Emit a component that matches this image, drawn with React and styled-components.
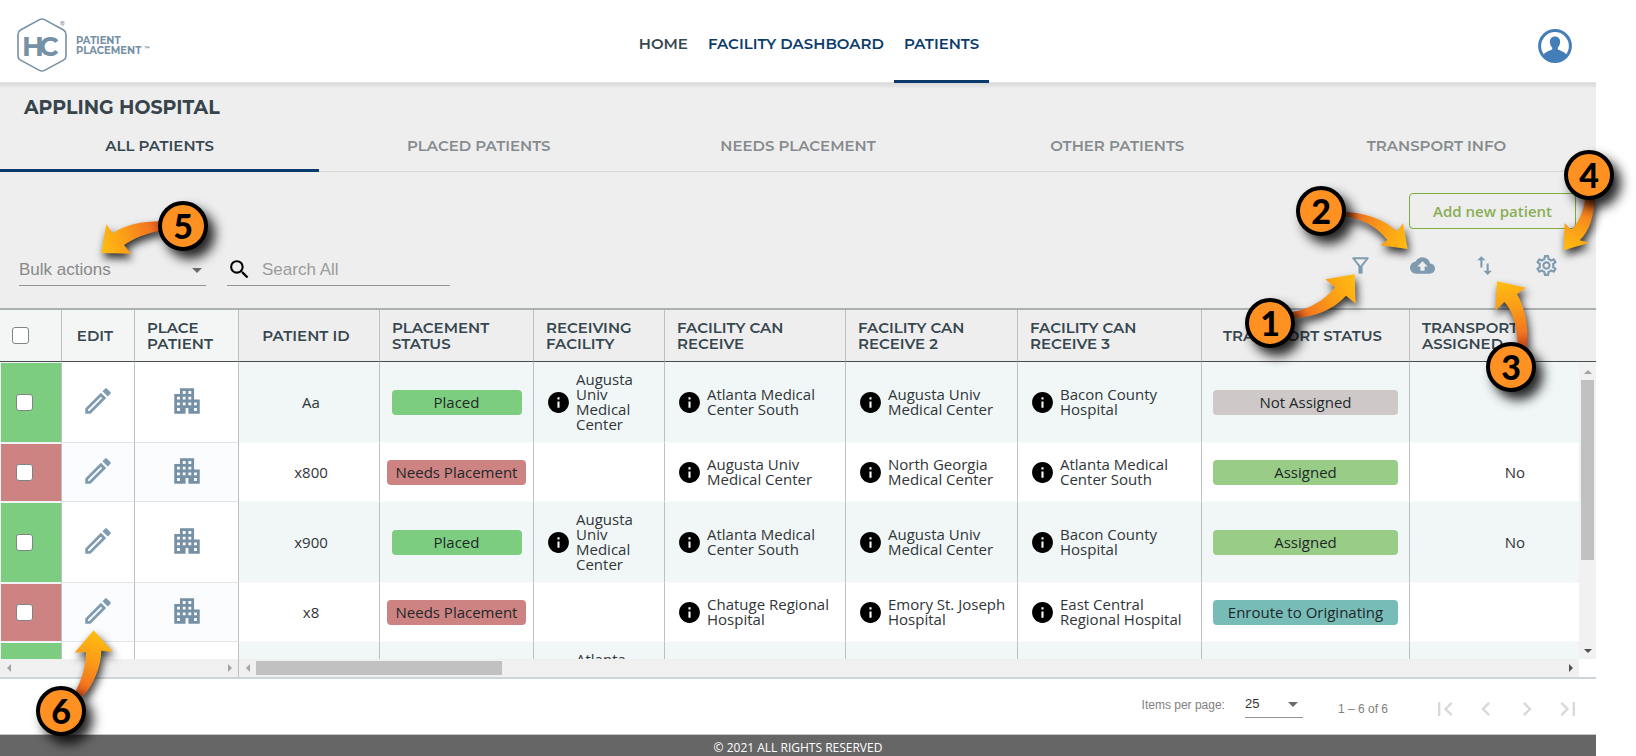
import React from "react";
import styled, { createGlobalStyle, css } from "styled-components";
import {
  MdApartment,
  MdArrowDropDown,
  MdBackup,
  MdChevronLeft,
  MdChevronRight,
  MdFirstPage,
  MdInfo,
  MdLastPage,
  MdOutlineEdit,
  MdOutlineFilterAlt,
  MdOutlineSettings,
  MdSearch,
  MdSwapVert,
} from "react-icons/md";

const heading = `"Montserrat", "Inter", sans-serif`;
const bodyFont = `"Open Sans", "Noto Sans", sans-serif`;
const formFont = `"Liberation Sans", Arial, sans-serif`;

const GlobalStyle = createGlobalStyle`
  *, *::before, *::after { box-sizing: border-box; }
  body { margin: 0; background: #fff; font-family: ${bodyFont}; color: #303538; }
  button, select, input { font: inherit; color: inherit; }
  svg { display: block; }
`;

const Page = styled.div`
  position: relative;
  overflow: hidden;
  padding-right: 40px;
`;

/* ---------- top bar ---------- */

const TopBar = styled.header`
  position: relative;
  display: grid;
  grid-template-columns: 1fr auto 1fr;
  height: 83px;
  padding: 0 24px 0 17px;
  background: #fff;
  border-bottom: 1px solid #e4e4e4;
`;

const Brand = styled.a`
  display: flex;
  align-items: center;
  gap: 9px;
  padding-top: 8px;
  color: #7690a5;
  text-decoration: none;
`;

const BrandName = styled.span`
  padding-top: 3px;
  font: 700 10px/10px ${heading};
  sup { font-size: 5px; line-height: 5px; margin-left: 3px; }
`;

const Nav = styled.nav`
  display: flex;
  padding-left: 29px;
`;

const NavLink = styled.a`
  display: flex;
  align-items: center;
  padding: 8px 10px 0;
  border-bottom: 3px solid ${(p) => (p.$active ? "#0b3b6b" : "transparent")};
  margin-bottom: -1px;
  font: 600 15px/20px ${heading};
  color: ${(p) => (p.$muted ? "#37474f" : "#0b3b6b")};
  text-decoration: none;
`;

const ProfileButton = styled.button`
  justify-self: end;
  align-self: center;
  margin-top: 9px;
  padding: 0;
  border: 0;
  background: none;
`;

/* ---------- title, tabs, toolbar ---------- */

const Panel = styled.section`
  background: linear-gradient(#d9d9d9, #eee 6px);
`;

const Title = styled.h1`
  margin: 0;
  padding: 13px 24px 0;
  font: 700 19px/24px ${heading};
  color: #37444c;
`;

const Tabs = styled.nav`
  display: flex;
`;

const Tab = styled.a`
  flex: 1;
  display: flex;
  align-items: center;
  justify-content: center;
  height: 52px;
  font: 600 15px/20px ${heading};
  color: ${(p) => (p.$active ? "#37474f" : "#868b8e")};
  text-decoration: none;
  box-shadow: inset 0 ${(p) => (p.$active ? "-3px #0b3b6b" : "-1px #d5d5d5")};
`;

const Toolbar = styled.div`
  display: flex;
  flex-direction: column;
  gap: 17px;
  padding: 21px 20px 22px 19px;
`;

const AddButton = styled.button`
  align-self: flex-end;
  width: 167px;
  height: 36px;
  border: 1px solid #7fae3e;
  border-radius: 4px;
  background: transparent;
  color: #8aae54;
  font: 600 15px/20px ${bodyFont};
`;

const Controls = styled.div`
  display: flex;
  align-items: center;
  height: 40px;
`;

const SelectBox = styled.label`
  position: relative;
  display: flex;
  align-items: center;
  width: ${(p) => p.$width}px;
  height: ${(p) => p.$height}px;
  padding-top: ${(p) => p.$drop || 0}px;
  border-bottom: 1px solid #949494;
  color: ${(p) => p.$color};
  font: ${(p) => p.$size}px/20px ${formFont};
  select {
    appearance: none;
    width: 100%;
    padding: 0;
    border: 0;
    background: none;
  }
  svg { position: absolute; right: ${(p) => p.$inset}px; color: #6c6c6c; pointer-events: none; }
`;

const SearchBox = styled.label`
  display: flex;
  align-items: center;
  gap: 10px;
  width: 223px;
  height: 40px;
  margin-left: 21px;
  padding-top: 8px;
  border-bottom: 1px solid #949494;
  color: #000;
  input {
    flex: 1;
    min-width: 0;
    padding: 0;
    border: 0;
    background: none;
    font: 17px/20px ${formFont};
  }
  input::placeholder { color: #9b9b9b; opacity: 1; }
`;

const Tools = styled.div`
  display: flex;
  gap: 37px;
  margin: 0 17px 2px auto;
`;

const IconButton = styled.button`
  display: inline-flex;
  padding: 0;
  border: 0;
  background: none;
  color: ${(p) => p.$color || "#7f9bb0"};
`;

/* ---------- table ---------- */

const TableRegion = styled.div`
  position: relative;
  height: 351px;
  overflow: hidden;
  border-top: 2px solid #abb0b3;
`;

const Table = styled.table`
  width: 1617px;
  table-layout: fixed;
  border-collapse: separate;
  border-spacing: 0;
  font: 15px/15px ${bodyFont};
`;

const HeadCell = styled.th`
  height: 52px;
  padding: ${(p) => (p.$wrap ? "0 0 0 12px" : "0 14px 0 8px")};
  border-right: 1px solid #bcc0c2;
  border-bottom: 1px solid #484d50;
  background: ${(p) => (p.$frozen ? "#f4f6f6" : "#eee")};
  color: #37474f;
  font: 600 15px/16px ${heading};
  text-align: ${(p) => (p.$wrap ? "left" : "center")};
  white-space: nowrap;
`;

const Cell = styled.td`
  height: 59px;
  padding: 10px 8px 10px 12px;
  border-right: 1px solid #bcc0c2;
  border-bottom: 1px solid ${(p) => (p.$frozen ? "#e2e5e8" : "#f8fafa")};
  background: ${(p) => {
    if (p.$frozen) return p.$odd ? "#fff" : "#fbfcfe";
    return p.$odd ? "#f1f7f7" : "#fff";
  }};
  text-align: center;
  ${(p) => p.$tight && css`padding: 0;`}
`;

const markColors = { Placed: "#7dcd80", "Needs Placement": "#cd8381" };

const MarkCell = styled.td`
  padding: 0 13px 0 15px;
  border: 1px solid #f1f4f4;
  border-right-color: #bcc0c2;
  background: ${(p) => markColors[p.$status]};
`;

const CheckBox = styled.input`
  appearance: none;
  display: block;
  width: 17px;
  height: 17px;
  margin: 0 0 0 ${(p) => (p.$head ? 4 : 0)}px;
  border: 1px solid #7d8587;
  border-radius: 3px;
  background: #fff;
`;

const Pill = styled.span`
  display: inline-block;
  min-width: ${(p) => p.$width}px;
  padding: 5px 9px;
  border-radius: 4px;
  background: ${(p) => p.$bg};
  color: #20282a;
  white-space: nowrap;
  vertical-align: middle;
`;

const Facility = styled.div`
  display: flex;
  align-items: center;
  gap: 5px;
  text-align: left;
  svg { flex: none; color: #000; }
`;

const VerticalScroll = styled.div`
  position: absolute;
  top: 53px;
  right: 0;
  bottom: 0;
  display: flex;
  flex-direction: column;
  align-items: center;
  width: 17px;
  background: #f1f1f1;
`;

const HorizontalScroll = styled.div`
  display: flex;
  align-items: center;
  height: 18px;
  padding-right: 17px;
  background: linear-gradient(#f0f0f0, #f0f0f0) no-repeat 0 0 / calc(100% - 17px) 100%;
`;

const Pane = styled.div`
  display: flex;
  align-items: center;
  justify-content: space-between;
  height: 18px;
  ${(p) => (p.$width ? `width: ${p.$width}px; border-right: 1px solid #bcc0c2;` : "flex: 1;")}
`;

const Thumb = styled.span`
  background: #c1c1c1;
  ${(p) =>
    p.$vertical
      ? "width: 13px; height: 180px; margin-bottom: auto;"
      : "width: 246px; height: 14px; margin-right: auto;"}
`;

const Arrow = styled.span`
  display: flex;
  align-items: center;
  justify-content: center;
  width: 17px;
  height: 17px;
  color: ${(p) => (p.$dark ? "#505050" : "#a3a3a3")};
`;

/* ---------- paginator and footer ---------- */

const Paginator = styled.div`
  display: flex;
  align-items: center;
  justify-content: flex-end;
  height: 58px;
  padding: 3px 14px 0;
  border-top: 2px solid #cfd4d8;
  background: #fff;
  color: #808080;
  font: 12px/16px ${formFont};
`;

const PerPage = styled.div`
  display: flex;
  align-items: center;
  gap: 20px;
  margin: 0 35px 8px 0;
`;

const Pages = styled.div`
  display: flex;
  gap: 13px;
  margin-left: 43px;
`;

const Footer = styled.footer`
  height: 21px;
  padding-top: 5px;
  background: #666;
  box-shadow: 0 -1px #c3c8c8;
  color: #fff;
  font: 12px/16px ${bodyFont};
  text-align: center;
`;

/* ---------- numbered callouts ---------- */

const CalloutBox = styled.div`
  position: absolute;
  z-index: 5;
  top: ${(p) => p.$top}px;
  ${(p) => (p.$left !== undefined ? `left: ${p.$left}px;` : `right: ${p.$right}px;`)}
  width: 50px;
  height: 50px;
  pointer-events: none;
  svg {
    position: absolute;
    top: -75px;
    left: -75px;
    filter: drop-shadow(2px 5px 4px rgba(0, 0, 0, 0.8));
  }
`;

const Disc = styled.span`
  position: relative;
  display: flex;
  align-items: center;
  justify-content: center;
  height: 50px;
  border: 4px solid #000;
  border-radius: 50%;
  background: #ff9122;
  box-shadow: 7px 8px 12px rgba(0, 0, 0, 0.85);
  color: #000;
  font: 900 34px/40px Lato, sans-serif;
`;

function Callout({ n, path, tip, ...place }) {
  return (
    <CalloutBox {...place}>
      <svg width="200" height="200" viewBox="-300 -300 600 600" aria-hidden="true">
        <defs>
          <linearGradient id={`arrow${n}`} gradientUnits="userSpaceOnUse" x1="0" y1="0" x2={tip[0]} y2={tip[1]}>
            <stop offset="0.26" stopColor="#d8561c" />
            <stop offset="0.38" stopColor="#f3761f" />
            <stop offset="0.65" stopColor="#fb9a18" />
            <stop offset="1" stopColor="#ffbe10" />
          </linearGradient>
        </defs>
        <path d={path} fill={`url(#arrow${n})`} />
      </svg>
      <Disc>{n}</Disc>
    </CalloutBox>
  );
}

const callouts = [
  { n: 1, $right: 341, $top: 298, tip: [254, -146], path: "M254-146L166-131L195-107C165-70 120-40 60-32L60-15C130-15 190-40 228-82L257-58Z" },
  { n: 2, $right: 290, $top: 186, tip: [260, 114], path: "M260 114L246 36L228 61C190 25 130 3 60 2L60 16C120 20 165 45 199 87L178 103Z" },
  { n: 3, $right: 100, $top: 342, tip: [-42, -257], path: "M-42-257L45-238L18-219C45-170 54-120 47-50L20-60C20-120 5-170-20-195L-47-169Z" },
  { n: 4, $right: 22, $top: 150, tip: [-76, 226], path: "M-76 226L-73 144L-52 165C-30 140-15 110-10 60L18 60C18 120 0 170-28 196L1 203Z" },
  { n: 5, $left: 158, $top: 201, tip: [-245, 81], path: "M-245 81L-230-5L-211 22C-170-5-120-15-60-14L-60 12C-110 22-150 38-177 57L-156 83Z" },
  { n: 6, $left: 36, $top: 686, tip: [98, -242], path: "M98-242L41-175L75-177C75-130 62-95 42-56L66-44C95-75 120-130 121-181L156-178Z" },
];

/* ---------- data ---------- */

const columns = [
  { lines: ["PATIENT ID"], width: 141 },
  { lines: ["PLACEMENT", "STATUS"], width: 154 },
  { lines: ["RECEIVING", "FACILITY"], width: 131 },
  { lines: ["FACILITY CAN", "RECEIVE"], width: 181 },
  { lines: ["FACILITY CAN", "RECEIVE 2"], width: 172 },
  { lines: ["FACILITY CAN", "RECEIVE 3"], width: 184 },
  { lines: ["TRANSPORT STATUS"], width: 208 },
  { lines: ["TRANSPORT", "ASSIGNED"], width: 207 },
];

const transportColors = {
  "Not Assigned": "#cec8c8",
  Assigned: "#99cc86",
  "Enroute to Originating": "#78bcb7",
};

const patients = [
  { id: "Aa", status: "Placed", facilities: ["Augusta Univ Medical Center", "Atlanta Medical Center South", "Augusta Univ Medical Center", "Bacon County Hospital"], transport: "Not Assigned", assigned: "" },
  { id: "x800", status: "Needs Placement", facilities: ["", "Augusta Univ Medical Center", "North Georgia Medical Center", "Atlanta Medical Center South"], transport: "Assigned", assigned: "No" },
  { id: "x900", status: "Placed", facilities: ["Augusta Univ Medical Center", "Atlanta Medical Center South", "Augusta Univ Medical Center", "Bacon County Hospital"], transport: "Assigned", assigned: "No" },
  { id: "x8", status: "Needs Placement", facilities: ["", "Chatuge Regional Hospital", "Emory St. Joseph Hospital", "East Central Regional Hospital"], transport: "Enroute to Originating", assigned: "" },
  { id: "x7", status: "Placed", facilities: ["Atlanta Medical Center South", "", "", ""], transport: "Assigned", assigned: "" },
];

const tabs = ["ALL PATIENTS", "PLACED PATIENTS", "NEEDS PLACEMENT", "OTHER PATIENTS", "TRANSPORT INFO"];

function Triangle({ points }) {
  return (
    <svg width="8" height="8" viewBox="0 0 8 8" fill="currentColor" aria-hidden="true">
      <polygon points={points} />
    </svg>
  );
}

const up = "0,6 4,2 8,6";
const down = "0,2 4,6 8,2";
const left = "6,0 2,4 6,8";
const right = "2,0 6,4 2,8";

function Logo() {
  return (
    <svg width="50" height="54" viewBox="0 0 50 54" aria-hidden="true">
      <path
        d="M22.5 1.6Q25 .3 27.500 1.600L46.500 12Q49 13.500 49 16.200V38Q49 40.700 46.500 42.100L27.500 52.400Q25 53.700 22.500 52.400L3.500 42.100Q1 40.700 1 38V16.200Q1 13.500 3.500 12Z"
        fill="none"
        stroke="currentColor"
        strokeWidth="1.600"
      />
      <g fill="currentColor" fontFamily="Montserrat, Inter, sans-serif" fontWeight="700" fontSize="27">
        <text x="5" y="38">H</text>
        <text x="22" y="38">C</text>
      </g>
      <text x="43" y="9" fill="currentColor" fontFamily="Inter, sans-serif" fontSize="7">®</text>
    </svg>
  );
}

function Avatar() {
  return (
    <svg width="34" height="34" viewBox="0 0 34 34" aria-hidden="true">
      <circle cx="17" cy="17" r="15.400" fill="#fff" stroke="#457db8" strokeWidth="3" />
      <path
        d="M17 7.500c3.300 0 5.200 2.300 5.100 5.400-.1 2.700-1 4.200-2.300 5.500v1.800c.8 1.200 6.200 1.900 8.800 5.400C26.500 30.500 22 33 17 33S7.500 30.500 5.400 25.600c2.600-3.500 8-4.200 8.800-5.400v-1.800c-1.300-1.300-2.200-2.800-2.300-5.500-.1-3.100 1.800-5.400 5.100-5.400z"
        fill="#457db8"
      />
    </svg>
  );
}

function PatientRow({ patient, odd }) {
  const { id, status, facilities, transport, assigned } = patient;
  return (
    <tr>
      <MarkCell $status={status}>
        <CheckBox type="checkbox" aria-label={`Select ${id}`} />
      </MarkCell>
      <Cell $frozen $odd={odd} $tight>
        <IconButton type="button" aria-label={`Edit ${id}`}>
          <MdOutlineEdit size={34} />
        </IconButton>
      </Cell>
      <Cell $frozen $odd={odd} $tight>
        <IconButton type="button" $color="#7690a5" aria-label={`Place ${id}`}>
          <MdApartment size={34} />
        </IconButton>
      </Cell>
      <Cell $odd={odd}>{id}</Cell>
      <Cell $odd={odd} $tight>
        <Pill $width={130} $bg={markColors[status]}>{status}</Pill>
      </Cell>
      {facilities.map((name, i) => (
        <Cell key={i} $odd={odd}>
          {name && (
            <Facility>
              <MdInfo size={25} />
              <span>{name}</span>
            </Facility>
          )}
        </Cell>
      ))}
      <Cell $odd={odd} $tight>
        <Pill $width={185} $bg={transportColors[transport]}>{transport}</Pill>
      </Cell>
      <Cell $odd={odd}>{assigned}</Cell>
    </tr>
  );
}

export default function App() {
  return (
    <Page>
      <GlobalStyle />
      <TopBar>
        <Brand href="#">
          <Logo />
          <BrandName>
            PATIENT
            <br />
            PLACEMENT<sup>™</sup>
          </BrandName>
        </Brand>
        <Nav>
          <NavLink href="#" $muted>HOME</NavLink>
          <NavLink href="#">FACILITY DASHBOARD</NavLink>
          <NavLink href="#" $active>PATIENTS</NavLink>
        </Nav>
        <ProfileButton type="button" aria-label="Profile">
          <Avatar />
        </ProfileButton>
      </TopBar>

      <Panel>
        <Title>APPLING HOSPITAL</Title>
        <Tabs>
          {tabs.map((name, i) => (
            <Tab key={name} href="#" $active={i === 0}>{name}</Tab>
          ))}
        </Tabs>
        <Toolbar>
          <AddButton type="button">Add new patient</AddButton>
          <Controls>
            <SelectBox $width={187} $height={40} $drop={8} $size={17} $inset={-3} $color="#888">
              <select aria-label="Bulk actions">
                <option>Bulk actions</option>
              </select>
              <MdArrowDropDown size={24} />
            </SelectBox>
            <SearchBox>
              <MdSearch size={25} />
              <input type="text" placeholder="Search All" aria-label="Search All" />
            </SearchBox>
            <Tools>
              <IconButton type="button" aria-label="Filter"><MdOutlineFilterAlt size={25} /></IconButton>
              <IconButton type="button" aria-label="Upload"><MdBackup size={25} /></IconButton>
              <IconButton type="button" aria-label="Sort"><MdSwapVert size={25} /></IconButton>
              <IconButton type="button" aria-label="Settings"><MdOutlineSettings size={25} /></IconButton>
            </Tools>
          </Controls>
        </Toolbar>
      </Panel>

      <TableRegion>
        <Table>
          <colgroup>
            <col width="62" />
            <col width="73" />
            <col width="104" />
            {columns.map((c) => (
              <col key={c.lines.join(" ")} width={c.width} />
            ))}
          </colgroup>
          <thead>
            <tr>
              <HeadCell $frozen><CheckBox $head type="checkbox" aria-label="Select all" /></HeadCell>
              <HeadCell $frozen>EDIT</HeadCell>
              <HeadCell $frozen $wrap>PLACE<br />PATIENT</HeadCell>
              {columns.map(({ lines }) => (
                <HeadCell key={lines.join(" ")} $wrap={lines.length > 1}>
                  {lines[0]}
                  {lines[1] && <><br />{lines[1]}</>}
                </HeadCell>
              ))}
            </tr>
          </thead>
          <tbody>
            {patients.map((p, i) => (
              <PatientRow key={p.id} patient={p} odd={i % 2 === 0} />
            ))}
          </tbody>
        </Table>
        <VerticalScroll aria-hidden="true">
          <Arrow><Triangle points={up} /></Arrow>
          <Thumb $vertical />
          <Arrow $dark><Triangle points={down} /></Arrow>
        </VerticalScroll>
      </TableRegion>
      <HorizontalScroll aria-hidden="true">
        <Pane $width={239}>
          <Arrow><Triangle points={left} /></Arrow>
          <Arrow><Triangle points={right} /></Arrow>
        </Pane>
        <Pane>
          <Arrow><Triangle points={left} /></Arrow>
          <Thumb />
          <Arrow $dark><Triangle points={right} /></Arrow>
        </Pane>
      </HorizontalScroll>

      <Paginator>
        <PerPage>
          <span id="per-page">Items per page:</span>
          <SelectBox $width={58} $height={26} $size={13} $inset={-2} $color="#333">
            <select aria-labelledby="per-page">
              <option>25</option>
            </select>
            <MdArrowDropDown size={24} />
          </SelectBox>
        </PerPage>
        <span>1 – 6 of 6</span>
        <Pages>
          <IconButton type="button" $color="#d9d9d9" aria-label="First page"><MdFirstPage size={28} /></IconButton>
          <IconButton type="button" $color="#d9d9d9" aria-label="Previous page"><MdChevronLeft size={28} /></IconButton>
          <IconButton type="button" $color="#d9d9d9" aria-label="Next page"><MdChevronRight size={28} /></IconButton>
          <IconButton type="button" $color="#d9d9d9" aria-label="Last page"><MdLastPage size={28} /></IconButton>
        </Pages>
      </Paginator>
      <Footer>© 2021 ALL RIGHTS RESERVED</Footer>

      {callouts.map((c) => (
        <Callout key={c.n} {...c} />
      ))}
    </Page>
  );
}
